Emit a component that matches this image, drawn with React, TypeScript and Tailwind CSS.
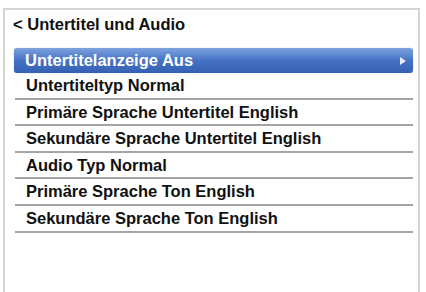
import React from 'react';

const rows = [
  'Untertiteltyp Normal',
  'Primäre Sprache Untertitel English',
  'Sekundäre Sprache Untertitel English',
  'Audio Typ Normal',
  'Primäre Sprache Ton English',
  'Sekundäre Sprache Ton English',
];

const App: React.FC = () => {
  return (
    <div className="w-[426px] h-[292px] bg-white overflow-hidden pt-[8px] pl-[3px]" style={{ fontFamily: '"Liberation Sans", Arial, sans-serif' }}>
      <div className="w-[417px] h-[300px] border-2 border-b-0 border-[#d4d4d4] flex flex-col">
        {/* Header */}
        <div className="pl-[8px] pt-[5px] h-[38px] text-[16.5px] leading-[19px] font-bold text-[#111]">
          &lt; Untertitel und Audio
        </div>

        {/* Menu list */}
        <div className="ml-[9px] mr-[5px] flex flex-col">
          <div className="h-[25px] rounded-[3px] bg-gradient-to-b from-[#7ea2de] via-[#4672c4] to-[#3560b4] flex items-center justify-between pl-[11px] pr-[7px] shadow-[0_0_1px_rgba(40,70,140,0.6)]">
            <span className="text-[16.5px] font-bold text-white leading-none">Untertitelanzeige Aus</span>
            <svg width="6" height="8" viewBox="0 0 6 8">
              <path d="M0 0 L6 4 L0 8 Z" fill="#e4ecfa" />
            </svg>
          </div>
          {rows.map((r) => (
            <div
              key={r}
              className="h-[26.6px] box-border border-b-2 border-[#a4a4a4] flex items-center pl-[11px] ml-[1px]"
            >
              <span className="text-[16.5px] font-bold text-[#111] leading-none">{r}</span>
            </div>
          ))}
        </div>
      </div>
    </div>
  );
};

export default App;
